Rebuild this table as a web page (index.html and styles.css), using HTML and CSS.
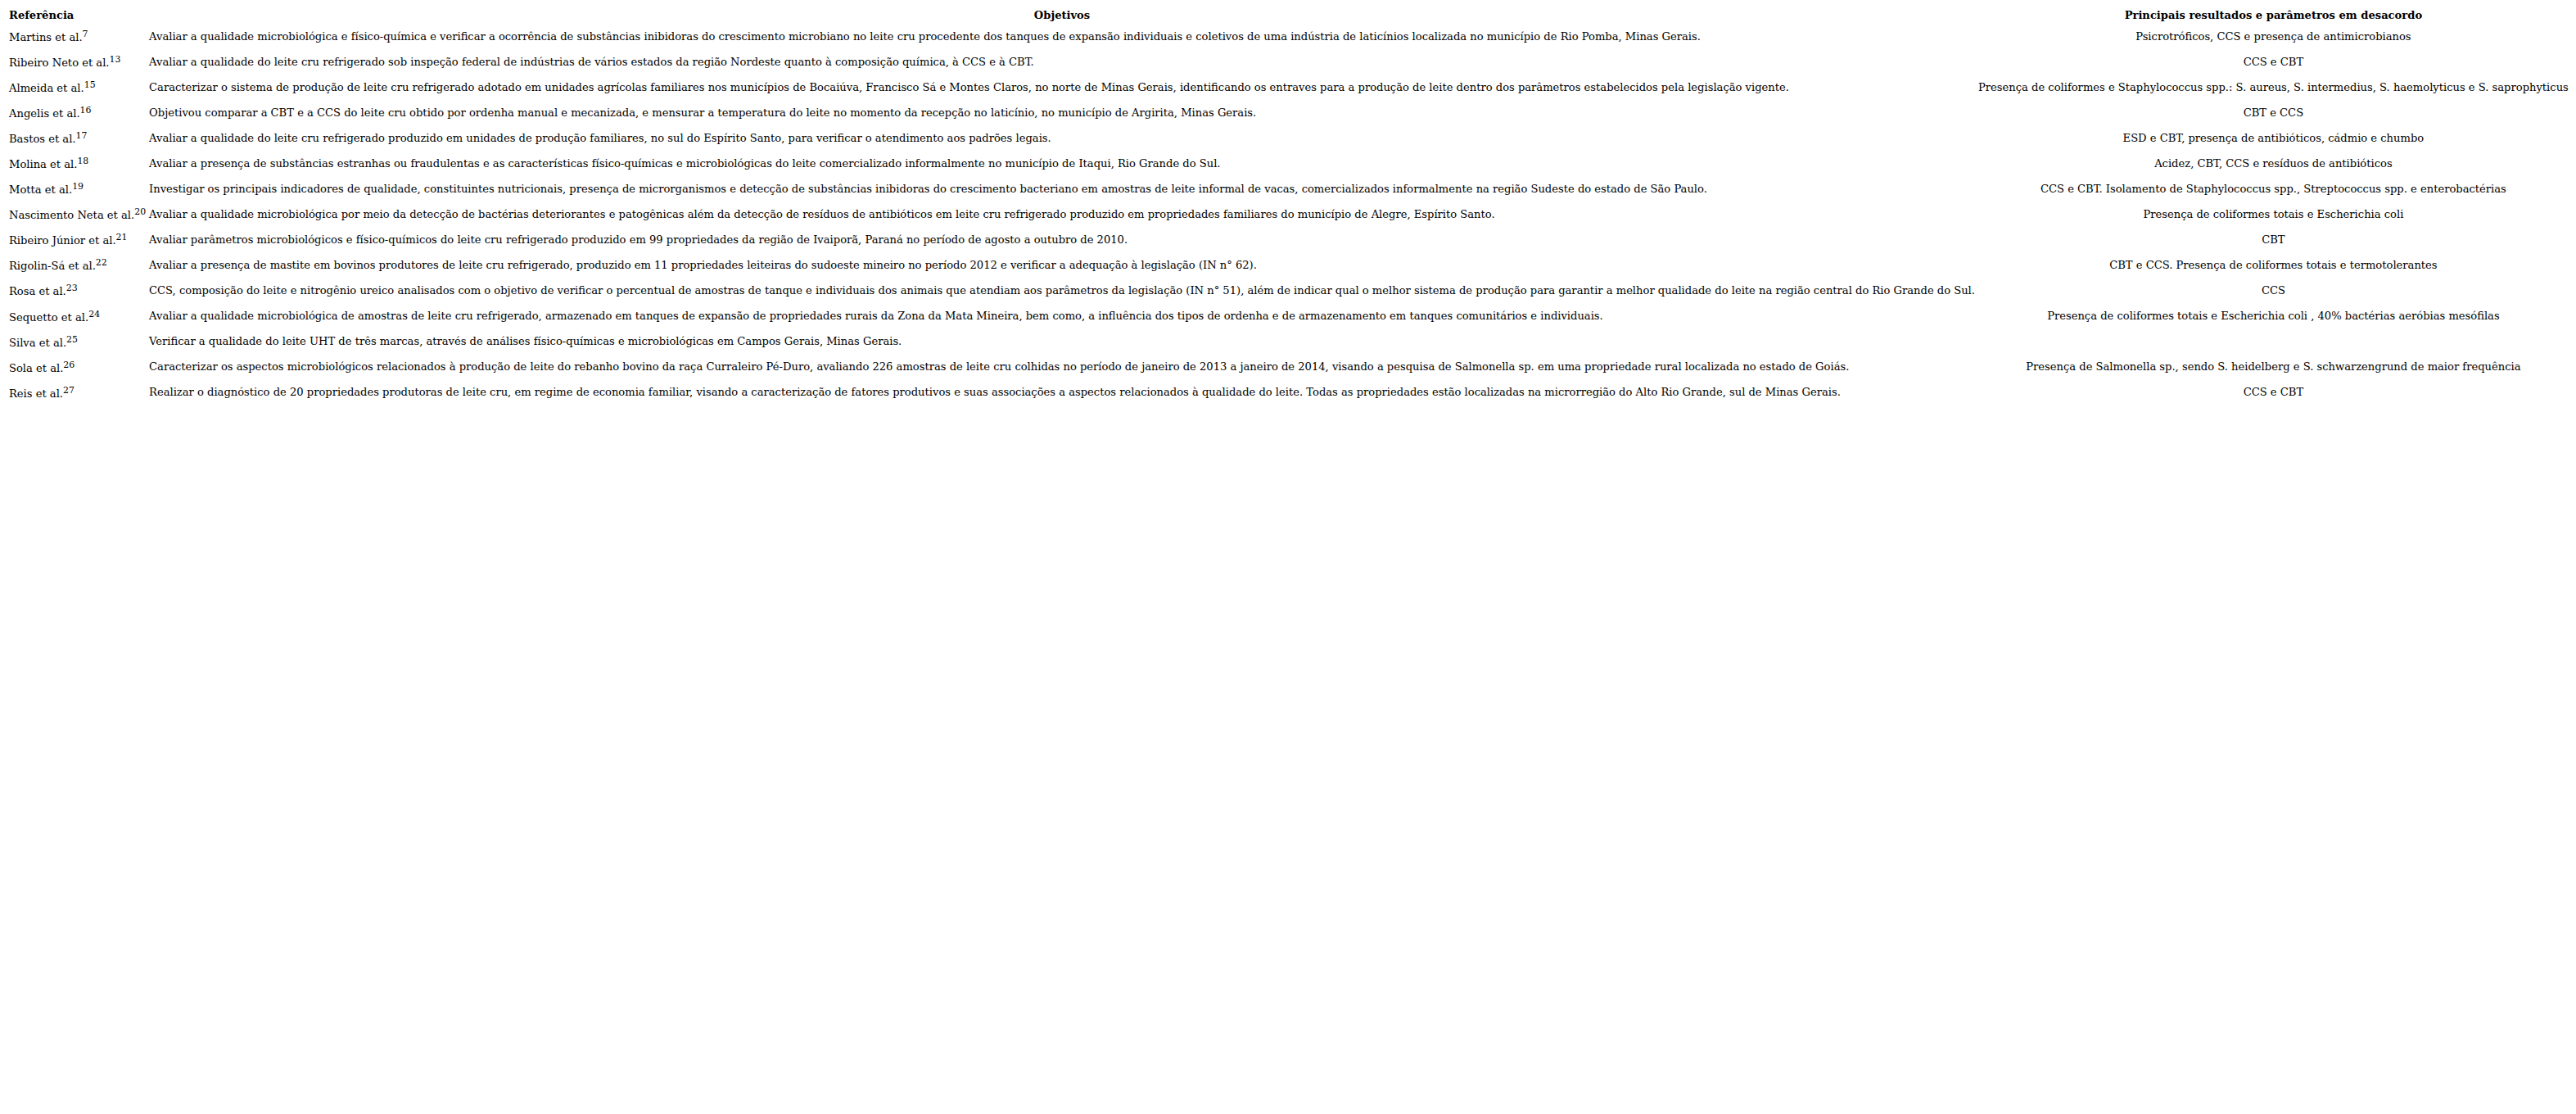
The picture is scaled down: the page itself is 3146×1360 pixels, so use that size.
FILE: index.html
```html
<!DOCTYPE html>
<html lang="pt">
<head>
<meta charset="utf-8">
<title>Qualidade do leite</title>
<link rel="stylesheet" href="styles.css">
</head>
<body>
<table class="tbl">
<thead>
<tr><th class="c-ref">Referência</th><th class="c-obj">Objetivos</th><th class="c-res">Principais resultados e parâmetros em desacordo</th></tr>
</thead>
<tbody>
<tr><td class="c-ref">Martins et al.<sup>7</sup></td><td class="c-obj">Avaliar a qualidade microbiológica e físico-química e verificar a ocorrência de substâncias inibidoras do crescimento microbiano no leite cru procedente dos tanques de expansão individuais e coletivos de uma indústria de laticínios localizada no município de Rio Pomba, Minas Gerais.</td><td class="c-res">Psicrotróficos, CCS e presença de antimicrobianos</td></tr>
<tr><td class="c-ref">Ribeiro Neto et al.<sup>13</sup></td><td class="c-obj">Avaliar a qualidade do leite cru refrigerado sob inspeção federal de indústrias de vários estados da região Nordeste quanto à composição química, à CCS e à CBT.</td><td class="c-res">CCS e CBT</td></tr>
<tr><td class="c-ref">Almeida et al.<sup>15</sup></td><td class="c-obj">Caracterizar o sistema de produção de leite cru refrigerado adotado em unidades agrícolas familiares nos municípios de Bocaiúva, Francisco Sá e Montes Claros, no norte de Minas Gerais, identificando os entraves para a produção de leite dentro dos parâmetros estabelecidos pela legislação vigente.</td><td class="c-res">Presença de coliformes e Staphylococcus spp.: S. aureus, S. intermedius, S. haemolyticus e S. saprophyticus</td></tr>
<tr><td class="c-ref">Angelis et al.<sup>16</sup></td><td class="c-obj">Objetivou comparar a CBT e a CCS do leite cru obtido por ordenha manual e mecanizada, e mensurar a temperatura do leite no momento da recepção no laticínio, no município de Argirita, Minas Gerais.</td><td class="c-res">CBT e CCS</td></tr>
<tr><td class="c-ref">Bastos et al.<sup>17</sup></td><td class="c-obj">Avaliar a qualidade do leite cru refrigerado produzido em unidades de produção familiares, no sul do Espírito Santo, para verificar o atendimento aos padrões legais.</td><td class="c-res">ESD e CBT, presença de antibióticos, cádmio e chumbo</td></tr>
<tr><td class="c-ref">Molina et al.<sup>18</sup></td><td class="c-obj">Avaliar a presença de substâncias estranhas ou fraudulentas e as características físico-químicas e microbiológicas do leite comercializado informalmente no município de Itaqui, Rio Grande do Sul.</td><td class="c-res">Acidez, CBT, CCS e resíduos de antibióticos</td></tr>
<tr><td class="c-ref">Motta et al.<sup>19</sup></td><td class="c-obj">Investigar os principais indicadores de qualidade, constituintes nutricionais, presença de microrganismos e detecção de substâncias inibidoras do crescimento bacteriano em amostras de leite informal de vacas, comercializados informalmente na região Sudeste do estado de São Paulo.</td><td class="c-res">CCS e CBT. Isolamento de Staphylococcus spp., Streptococcus spp. e enterobactérias</td></tr>
<tr><td class="c-ref">Nascimento Neta et al.<sup>20</sup></td><td class="c-obj">Avaliar a qualidade microbiológica por meio da detecção de bactérias deteriorantes e patogênicas além da detecção de resíduos de antibióticos em leite cru refrigerado produzido em propriedades familiares do município de Alegre, Espírito Santo.</td><td class="c-res">Presença de coliformes totais e Escherichia coli</td></tr>
<tr><td class="c-ref">Ribeiro Júnior et al.<sup>21</sup></td><td class="c-obj">Avaliar parâmetros microbiológicos e físico-químicos do leite cru refrigerado produzido em 99 propriedades da região de Ivaiporã, Paraná no período de agosto a outubro de 2010.</td><td class="c-res">CBT</td></tr>
<tr><td class="c-ref">Rigolin-Sá et al.<sup>22</sup></td><td class="c-obj">Avaliar a presença de mastite em bovinos produtores de leite cru refrigerado, produzido em 11 propriedades leiteiras do sudoeste mineiro no período 2012 e verificar a adequação à legislação (IN n° 62).</td><td class="c-res">CBT e CCS. Presença de coliformes totais e termotolerantes</td></tr>
<tr><td class="c-ref">Rosa et al.<sup>23</sup></td><td class="c-obj">CCS, composição do leite e nitrogênio ureico analisados com o objetivo de verificar o percentual de amostras de tanque e individuais dos animais que atendiam aos parâmetros da legislação (IN n° 51), além de indicar qual o melhor sistema de produção para garantir a melhor qualidade do leite na região central do Rio Grande do Sul.</td><td class="c-res">CCS</td></tr>
<tr><td class="c-ref">Sequetto et al.<sup>24</sup></td><td class="c-obj">Avaliar a qualidade microbiológica de amostras de leite cru refrigerado, armazenado em tanques de expansão de propriedades rurais da Zona da Mata Mineira, bem como, a influência dos tipos de ordenha e de armazenamento em tanques comunitários e individuais.</td><td class="c-res">Presença de coliformes totais e Escherichia coli , 40% bactérias aeróbias mesófilas</td></tr>
<tr><td class="c-ref">Silva et al.<sup>25</sup></td><td class="c-obj">Verificar a qualidade do leite UHT de três marcas, através de análises físico-químicas e microbiológicas em Campos Gerais, Minas Gerais.</td><td class="c-res"></td></tr>
<tr><td class="c-ref">Sola et al.<sup>26</sup></td><td class="c-obj">Caracterizar os aspectos microbiológicos relacionados à produção de leite do rebanho bovino da raça Curraleiro Pé-Duro, avaliando 226 amostras de leite cru colhidas no período de janeiro de 2013 a janeiro de 2014, visando a pesquisa de Salmonella sp. em uma propriedade rural localizada no estado de Goiás.</td><td class="c-res">Presença de Salmonella sp., sendo S. heidelberg e S. schwarzengrund de maior frequência</td></tr>
<tr><td class="c-ref">Reis et al.<sup>27</sup></td><td class="c-obj">Realizar o diagnóstico de 20 propriedades produtoras de leite cru, em regime de economia familiar, visando a caracterização de fatores produtivos e suas associações a aspectos relacionados à qualidade do leite. Todas as propriedades estão localizadas na microrregião do Alto Rio Grande, sul de Minas Gerais.</td><td class="c-res">CCS e CBT</td></tr>
</tbody>
</table>
</body>
</html>
```
FILE: styles.css
```css
html, body {
  background: #ffffff;
}
body {
  margin: 8px;
  color: #000000;
  font-family: "DejaVu Serif", serif;
  font-size: 13.1px;
}
.tbl {
  border-collapse: separate;
  border-spacing: 2px;
}
.tbl th,
.tbl td {
  white-space: nowrap;
  vertical-align: middle;
  padding: 1px;
}
.tbl th {
  font-weight: bold;
  text-align: center;
}
.tbl th.c-ref {
  text-align: left;
}
.tbl td {
  padding-top: 6px;
  padding-bottom: 4.7px;
}
.tbl td.c-ref,
.tbl td.c-obj {
  text-align: left;
}
.tbl td.c-res {
  text-align: center;
}
```
